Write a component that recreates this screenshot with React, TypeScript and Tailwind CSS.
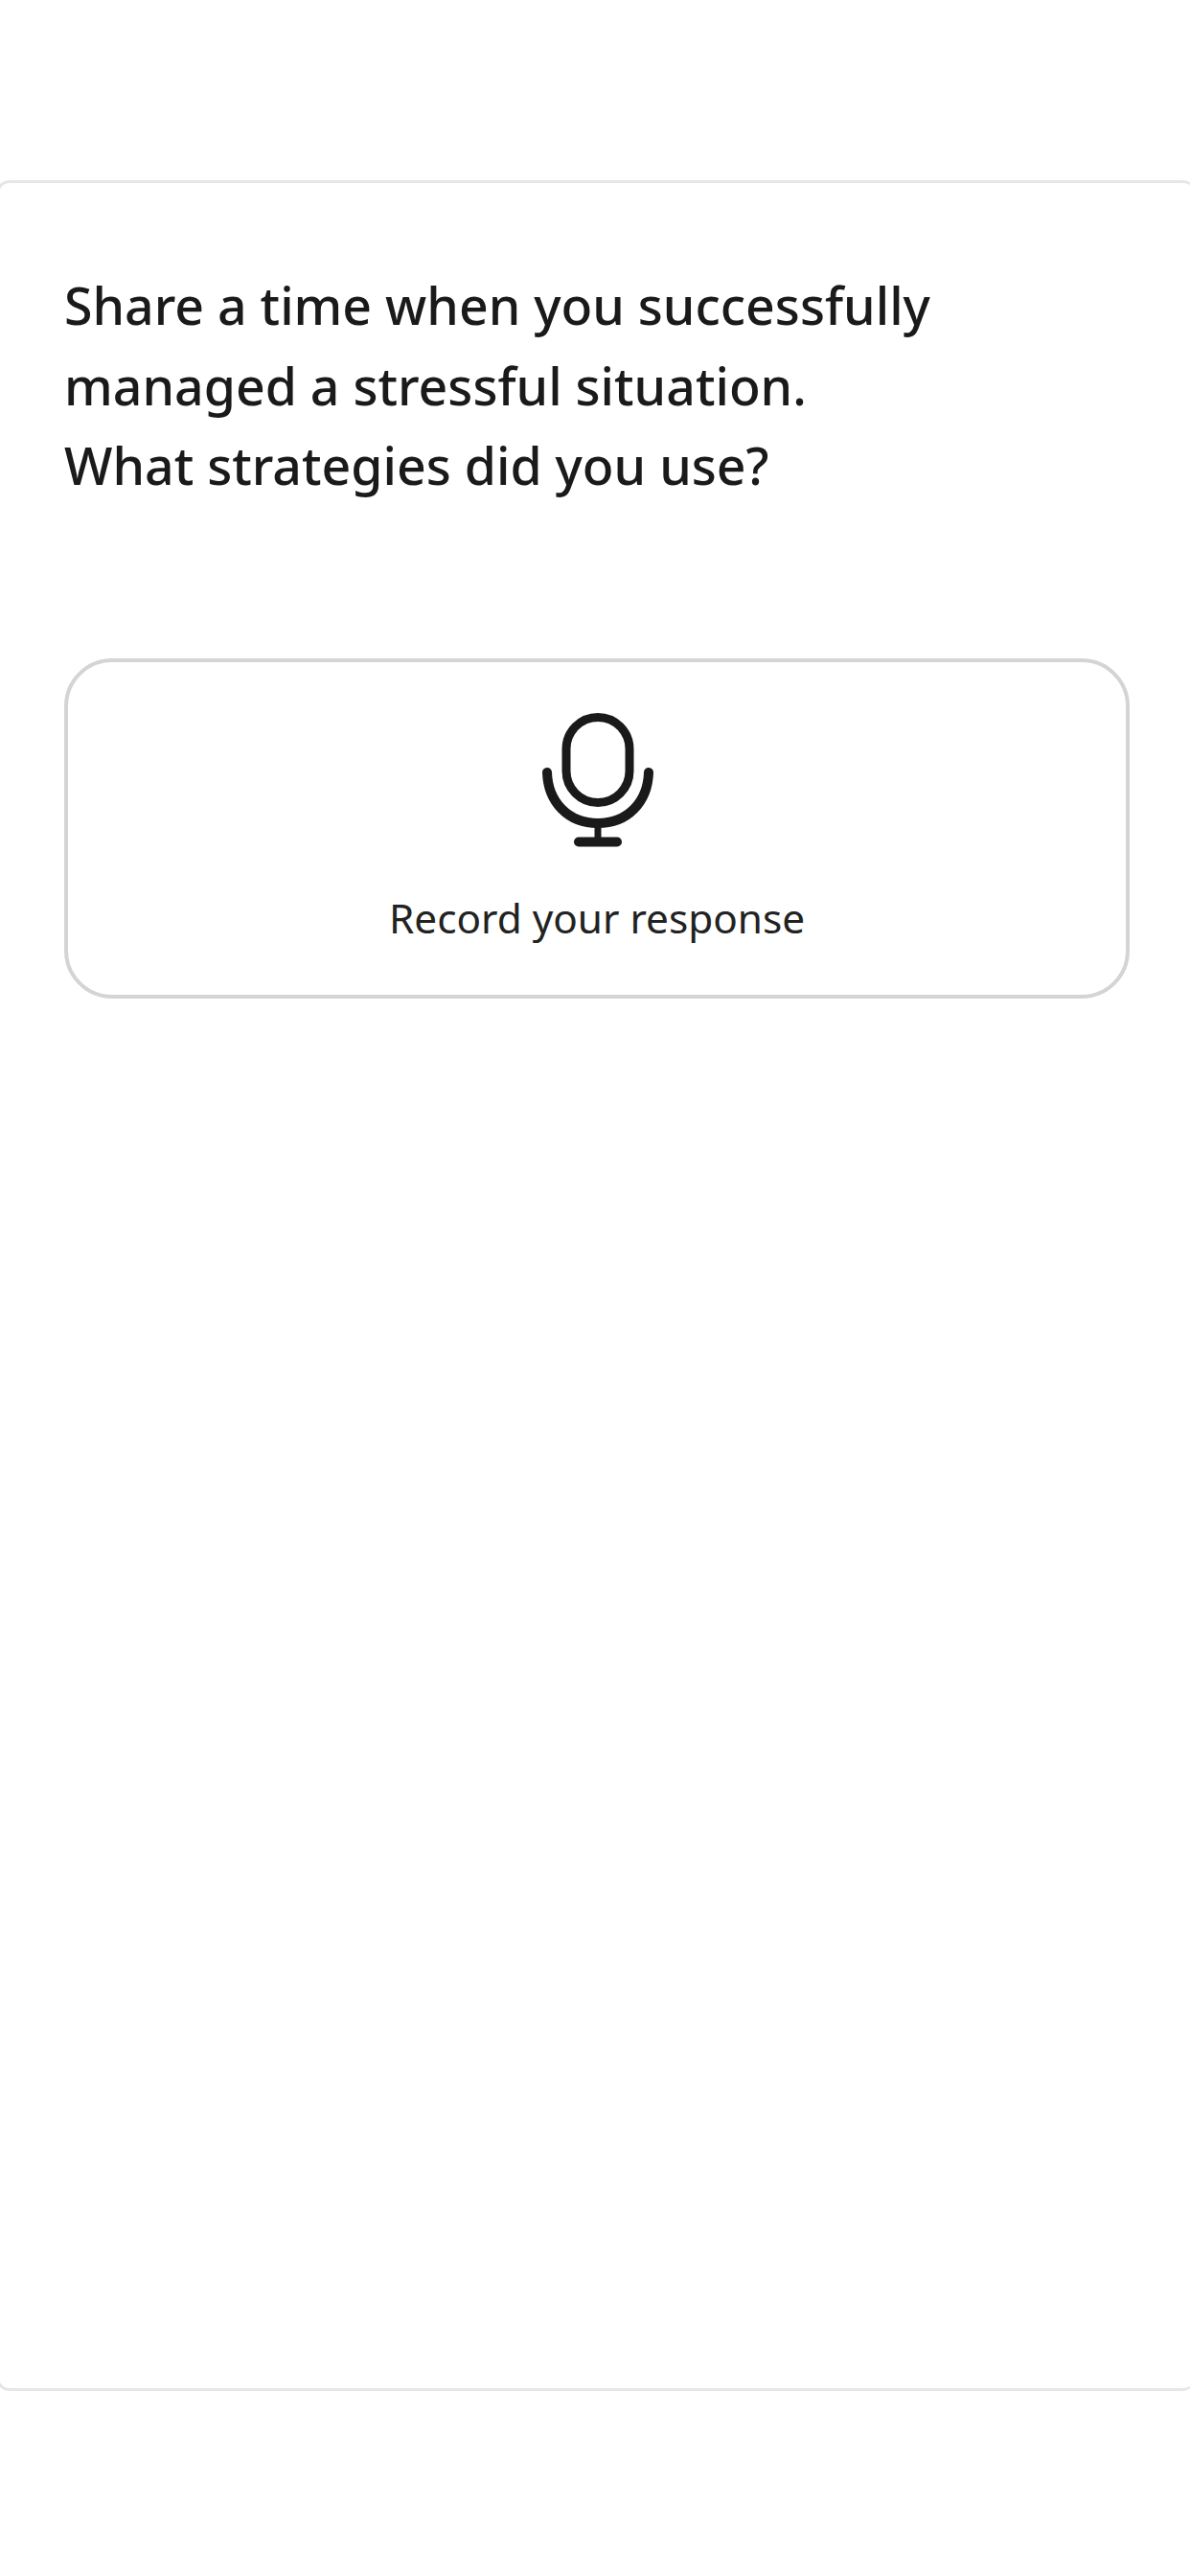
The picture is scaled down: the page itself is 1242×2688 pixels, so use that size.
export default function App() {
  return (
    <div className="w-[1242px] h-[2688px] bg-white overflow-hidden pt-[188px] font-['Noto_Sans','Lato',sans-serif] text-[#1a1a1a]">
      <div className="w-[1252px] -ml-[4px] h-[2307px] border-y-[3px] border-l-[3px] border-[#e6e6ea] rounded-[14px] pl-[68px] pt-[86px]">
        <p className="w-[1040px] text-[53.6px] leading-[83.5px] font-medium whitespace-pre-line">
          {"Share a time when you successfully\nmanaged a stressful situation.\nWhat strategies did you use?"}
        </p>
        <div className="mt-[159px] w-[1112px] h-[355px] border-[4px] border-[#d4d4d4] rounded-[50px] flex flex-col items-center pt-[53px]">
          <svg className="ml-[2px]" width="116" height="140" viewBox="0 0 116 140" fill="none" stroke="#1a1a1a" strokeLinecap="round">
            <rect x="25" y="4.5" width="66" height="89" rx="33" strokeWidth="9" />
            <path d="M5 62 C6 93 27 115 58 115 C89 115 110 93 111 62" strokeWidth="10" />
            <path d="M58 115 V134" strokeWidth="7" />
            <path d="M38 134.5 H78" strokeWidth="10" />
          </svg>
          <span className="mt-[46px] text-[42.3px] leading-[56px] text-[#222222]">Record your response</span>
        </div>
      </div>
    </div>
  );
}
